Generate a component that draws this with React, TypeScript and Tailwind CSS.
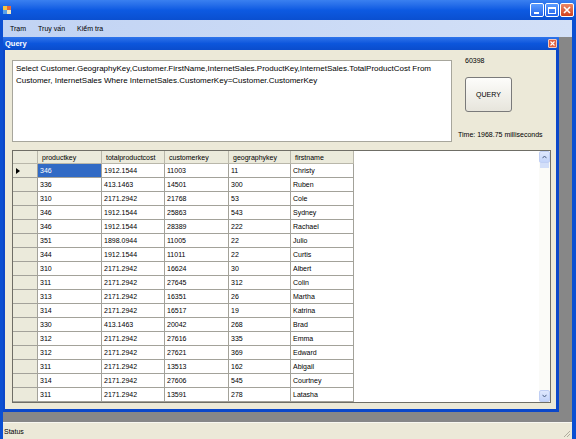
import React from "react";

const headers = ["productkey", "totalproductcost", "customerkey", "geographykey", "firstname"];
const colW = ["w-[64px]", "w-[63px]", "w-[64px]", "w-[62px]", "w-[63px]"];

const rows: string[][] = [
  ["346", "1912.1544", "11003", "11", "Christy"],
  ["336", "413.1463", "14501", "300", "Ruben"],
  ["310", "2171.2942", "21768", "53", "Cole"],
  ["346", "1912.1544", "25863", "543", "Sydney"],
  ["346", "1912.1544", "28389", "222", "Rachael"],
  ["351", "1898.0944", "11005", "22", "Julio"],
  ["344", "1912.1544", "11011", "22", "Curtis"],
  ["310", "2171.2942", "16624", "30", "Albert"],
  ["311", "2171.2942", "27645", "312", "Colin"],
  ["313", "2171.2942", "16351", "26", "Martha"],
  ["314", "2171.2942", "16517", "19", "Katrina"],
  ["330", "413.1463", "20042", "268", "Brad"],
  ["312", "2171.2942", "27616", "335", "Emma"],
  ["312", "2171.2942", "27621", "369", "Edward"],
  ["311", "2171.2942", "13513", "162", "Abigail"],
  ["314", "2171.2942", "27606", "545", "Courtney"],
  ["311", "2171.2942", "13591", "278", "Latasha"],
];

function AppIcon() {
  return (
    <svg width="8" height="8" viewBox="0 0 8 8">
      <rect x="0" y="0" width="4" height="4" fill="#f6c744" />
      <rect x="4" y="0" width="4" height="4" fill="#e86a3a" />
      <rect x="0" y="4" width="4" height="4" fill="#5aa0e8" />
      <rect x="4" y="4" width="4" height="4" fill="#f1e6c0" />
    </svg>
  );
}

function WinButtons() {
  return (
    <div className="flex gap-[1px]">
      <div className="w-[14px] h-[14px] rounded-[2px] border border-white bg-linear-to-b from-[#5c9cff] to-[#2363ea] flex items-end justify-start pl-[3px] pb-[2px]">
        <div className="w-[5px] h-[2px] bg-white" />
      </div>
      <div className="w-[14px] h-[14px] rounded-[2px] border border-white bg-linear-to-b from-[#5c9cff] to-[#2363ea] flex items-center justify-center">
        <div className="w-[8px] h-[7px] border border-white border-t-2" />
      </div>
      <div className="w-[14px] h-[14px] rounded-[2px] border border-white bg-linear-to-b from-[#ec8766] to-[#cf3f1b] flex items-center justify-center">
        <svg width="8" height="8" viewBox="0 0 8 8">
          <path d="M1 1 L7 7 M7 1 L1 7" stroke="white" strokeWidth="1.6" />
        </svg>
      </div>
    </div>
  );
}

function ScrollBtn({ up }: { up: boolean }) {
  return (
    <div className="h-[12px] w-[11px] bg-linear-to-b from-[#dfe8fd] to-[#c3d4fa] border border-[#c0cff4] rounded-[2px] flex items-center justify-center">
      <svg width="5" height="4" viewBox="0 0 5 4">
        <path d={up ? "M0.5 3.2 L2.5 1 L4.5 3.2" : "M0.5 0.8 L2.5 3 L4.5 0.8"} stroke="#4d6185" strokeWidth="1" fill="none" />
      </svg>
    </div>
  );
}

export default function App() {
  return (
    <div className="w-[576px] h-[439px] flex flex-col overflow-hidden bg-[#0b4fd2] font-['Liberation_Sans',Arial,sans-serif] text-[7px] leading-none text-black">
      {/* Title bar */}
      <div className="h-[20px] flex items-center bg-linear-to-b from-[#3a80f0] via-[#0d5ae2] to-[#0a4fd0] pl-[3px] pr-[2px]">
        <AppIcon />
        <div className="flex-1" />
        <WinButtons />
      </div>

      <div className="flex flex-1 min-h-0">
        <div className="w-[3px] bg-[#0b4fd2]" />
        <div className="flex-1 flex flex-col min-w-0">
          {/* Menu bar */}
          <div className="h-[17px] bg-linear-to-r from-[#c1d3f3] to-[#d3e0f7] flex items-center gap-[12px] pl-[7px] text-[7px]">
            <span>Trạm</span>
            <span>Truy vấn</span>
            <span>Kiểm tra</span>
          </div>

          {/* MDI client */}
          <div className="flex-1 bg-[#878787] flex flex-col">
            <div className="w-[556px] h-[375px] flex flex-col">
              {/* child title */}
              <div className="h-[13px] bg-linear-to-b from-[#2f74ea] via-[#0c56dc] to-[#0a4ccc] flex items-center pl-[2px] pr-[2px]">
                <span className="text-white font-bold text-[7.5px]">Query</span>
                <div className="flex-1" />
                <div className="w-[9px] h-[9px] rounded-[1px] border border-[#f3c8bc] bg-[#e0603f] flex items-center justify-center">
                  <svg width="5" height="5" viewBox="0 0 5 5">
                    <path d="M0.5 0.5 L4.5 4.5 M4.5 0.5 L0.5 4.5" stroke="white" strokeWidth="1.1" />
                  </svg>
                </div>
              </div>
              <div className="flex-1 flex border-l-[2px] border-r-[3px] border-b-[3px] border-[#0b47c9]">
                <div className="flex-1 bg-[#ece9d8] flex flex-col pl-[7px] pr-[5px] pt-[4px]">
                  {/* top section */}
                  <div className="flex h-[88px]">
                    <div className="mt-[6px] w-[440px] h-[82px] bg-white border border-[#a7a69c] pl-[3px] pt-[2px] text-[8px] leading-[12px] whitespace-nowrap">
                      Select Customer.GeographyKey,Customer.FirstName,InternetSales.ProductKey,InternetSales.TotalProductCost From
                      <br />
                      Customer, InternetSales Where InternetSales.CustomerKey=Customer.CustomerKey
                    </div>
                    <div className="ml-[13px] flex flex-col">
                      <div className="h-[12px] flex items-center">60398</div>
                      <div className="mt-[11px] w-[47px] h-[35px] rounded-[3px] border border-[#7a7a7a] bg-linear-to-b from-[#fdfdfb] to-[#e7e5dc] flex items-center justify-center">
                        QUERY
                      </div>
                      <div className="mt-[16px] h-[12px] flex items-center -ml-[7px] whitespace-nowrap">Time: 1968.75 milliseconds</div>
                    </div>
                  </div>

                  {/* grid */}
                  <div className="mt-[8px] w-[539px] h-[253px] border border-[#6f6e66] bg-white flex">
                    <div className="flex-1 flex flex-col overflow-hidden">
                      <div className="flex h-[13px]">
                        <div className="w-[25px] h-full bg-[#ebeadb] border-r border-b border-[#b9b7aa]" />
                        {headers.map((h, i) => (
                          <div key={h} className={`${colW[i]} h-full bg-[#ebeadb] border-r border-b border-[#b9b7aa] flex items-center pl-[4px]`}>
                            {h}
                          </div>
                        ))}
                      </div>
                      {rows.map((r, ri) => (
                        <div key={ri} className="flex h-[14px]">
                          <div className="w-[25px] h-full bg-[#ebeadb] border-r border-b border-[#a3a29a] flex items-center pl-[3px]">
                            {ri === 0 && (
                              <svg width="4" height="6" viewBox="0 0 4 6">
                                <path d="M0 0 L4 3 L0 6 Z" fill="black" />
                              </svg>
                            )}
                          </div>
                          {r.map((c, ci) => (
                            <div
                              key={ci}
                              className={`${colW[ci]} h-full border-r border-b border-[#a3a29a] flex items-center pl-[2px] ${
                                ri === 0 && ci === 0 ? "bg-[#316ac5] text-white" : ""
                              }`}
                            >
                              {c}
                            </div>
                          ))}
                        </div>
                      ))}
                    </div>
                    {/* scrollbar */}
                    <div className="w-[11px] flex flex-col bg-[#fbfbf8]">
                      <ScrollBtn up={true} />
                      <div className="h-[5px] mx-[1px] bg-[#d3dff9]" />
                      <div className="flex-1" />
                      <ScrollBtn up={false} />
                    </div>
                  </div>
                </div>
              </div>
            </div>
          </div>

          {/* Status bar */}
          <div className="h-[17px] bg-[#ece9d8] border-t border-[#f8f7f0] flex items-center pl-[1px] relative">
            <span>Status</span>
            <div className="absolute right-[1px] bottom-[1px]">
              <svg width="8" height="8" viewBox="0 0 8 8">
                <path d="M7 1 L1 7 M7 4 L4 7 M7 7 L7 7" stroke="#b0ad9e" strokeWidth="1" />
              </svg>
            </div>
          </div>
        </div>
        <div className="w-[4px] bg-[#0b4fd2]" />
      </div>
    </div>
  );
}
